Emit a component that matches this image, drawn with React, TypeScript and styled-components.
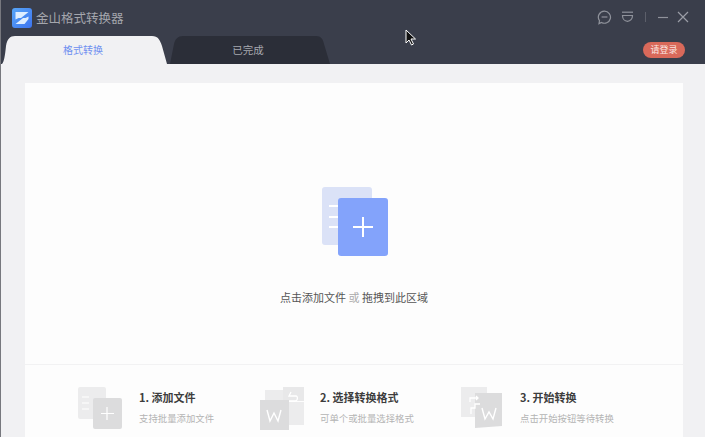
import styled, { createGlobalStyle } from "styled-components"

const font = `"Noto Sans CJK SC", "Noto Sans", sans-serif`

const GlobalStyle = createGlobalStyle`
    html, body {
        margin: 0;
        padding: 0;
        background: #f1f1f3;
    }
    * {
        box-sizing: border-box;
    }
`

const steps = [
    { title: "1. 添加文件", hint: "支持批量添加文件", icon: <AddGlyph />, width: 181, inset: 0 },
    { title: "2. 选择转换格式", hint: "可单个或批量选择格式", icon: <FormatGlyph />, width: 200, inset: 1 },
    { title: "3. 开始转换", hint: "点击开始按钮等待转换", icon: <StartGlyph />, width: 0, inset: 2 },
]

function Logo() {
    return (
        <svg width="20" height="20" viewBox="0 0 20 20">
            <defs>
                <linearGradient id="logoFill" x1="0" y1="0" x2="1" y2="1">
                    <stop offset="0" stopColor="#58a6f7" />
                    <stop offset="1" stopColor="#3d74f0" />
                </linearGradient>
            </defs>
            <rect width="20" height="20" rx="3" fill="url(#logoFill)" />
            <path d="M3.500 4h13L9 10h4.500l3-1.500V11l-4 5H3.500L11 10H6.500l-3 1.500z" fill="#dfeeff" />
        </svg>
    )
}

function ChatIcon() {
    return (
        <svg width="15" height="15" viewBox="0 0 15 15" fill="none" stroke="#8f929b" strokeWidth="1.2">
            <path d="M7.500 1.200a6 6 0 1 1-3 11.200L2 13.600l.5-2.900A6 6 0 0 1 7.500 1.200z" />
            <path d="M4.600 7h5.800" />
        </svg>
    )
}

function SkinIcon() {
    return (
        <svg width="13" height="12" viewBox="0 0 13 12" fill="none" stroke="#8f929b" strokeWidth="1.2">
            <path d="M1 1.200h11" />
            <path d="M1.500 4.500h10c0 3.500-2.200 5.800-5 5.800s-5-2.300-5-5.800z" />
        </svg>
    )
}

function MinIcon() {
    return (
        <svg width="10" height="10" viewBox="0 0 10 10" stroke="#8f929b" strokeWidth="1.2">
            <path d="M0 5.500h10" />
        </svg>
    )
}

function CloseIcon() {
    return (
        <svg width="12" height="12" viewBox="0 0 12 12" stroke="#9a9da6" strokeWidth="1.2">
            <path d="M1 1l10 10M11 1L1 11" />
        </svg>
    )
}

function DropGlyph() {
    return (
        <svg width="67" height="70" viewBox="0 0 67 70">
            <rect x="1" y="0" width="50" height="58" rx="3" fill="#dbe2f7" />
            <path d="M8 19h10M8 30h10M8 40h10" stroke="#fff" strokeWidth="2" />
            <rect x="17" y="11" width="50" height="58" rx="3" fill="#83a3fb" />
            <path d="M42 30v20M32 40h20" stroke="#fff" strokeWidth="2" />
        </svg>
    )
}

function AddGlyph() {
    return (
        <svg width="44" height="42" viewBox="0 0 44 42">
            <rect x="0" y="0" width="28" height="32" rx="2" fill="#ececed" />
            <path d="M4 10h7M4 16h7M4 22h7" stroke="#fff" strokeWidth="1.2" />
            <rect x="15" y="11" width="29" height="31" rx="2" fill="#dcdcdd" />
            <path d="M29 20v13M23 26.500h13" stroke="#fff" strokeWidth="1.2" />
        </svg>
    )
}

function FormatGlyph() {
    return (
        <svg width="44" height="43" viewBox="0 0 44 43">
            <rect x="5" y="3" width="18" height="12" fill="#ececed" />
            <rect x="23" y="0" width="21" height="14" fill="#e8e8e9" />
            <rect x="29" y="15" width="15" height="23" fill="#ececed" />
            <path d="M31 5l-2 4h7c2 0 2 5-1 5h-6" fill="none" stroke="#fff" strokeWidth="1.3" />
            <rect x="0" y="13" width="29" height="30" fill="#dcdcdd" />
            <path d="M7 23l3 11 4-8 4 8 3-11" fill="none" stroke="#fff" strokeWidth="1.4" />
        </svg>
    )
}

function StartGlyph() {
    return (
        <svg width="41" height="41" viewBox="0 0 41 41">
            <rect x="0" y="0" width="26" height="30" fill="#ececed" />
            <path d="M14 6h27v33l-27 2z" fill="#dcdcdd" />
            <path d="M9 15v-4h8M15 9l2 2-2 2M19 17h-5v4h-4v6" fill="none" stroke="#fff" strokeWidth="1.3" />
            <path d="M21 21l3 11 4-7 4 7 3-11" fill="none" stroke="#fff" strokeWidth="1.4" />
        </svg>
    )
}

export default function App() {
    return (
        <>
            <GlobalStyle />
            <Window>
                <Header>
                    <TitleRow>
                        <Logo />
                        <AppName>金山格式转换器</AppName>
                        <WindowControls>
                            <ChatIcon />
                            <SkinIcon />
                            <Separator />
                            <MinIcon />
                            <CloseIcon />
                        </WindowControls>
                    </TitleRow>
                    <TabRow>
                        <ActiveTab>格式转换</ActiveTab>
                        <IdleTab>已完成</IdleTab>
                        <LoginButton>请登录</LoginButton>
                    </TabRow>
                </Header>
                <Body>
                    <Card>
                        <DropArea>
                            <DropGlyph />
                            <DropText>
                                点击添加文件 <Muted>或</Muted> 拖拽到此区域
                            </DropText>
                        </DropArea>
                        <StepRow>
                            {steps.map(step => (
                                <Step key={step.title} $width={step.width}>
                                    <StepIcon $inset={step.inset}>{step.icon}</StepIcon>
                                    <div>
                                        <StepTitle>{step.title}</StepTitle>
                                        <StepHint>{step.hint}</StepHint>
                                    </div>
                                </Step>
                            ))}
                        </StepRow>
                    </Card>
                </Body>
                <Cursor width="12" height="17" viewBox="0 0 12 17">
                    <path d="M1 1v13l3-3 2.500 5 2-1-2.500-5h4.500z" fill="#111" stroke="#fff" strokeWidth="1" />
                </Cursor>
            </Window>
        </>
    )
}

const Window = styled.div`
    position: relative;
    width: 705px;
    height: 437px;
    overflow: hidden;
    display: flex;
    flex-direction: column;
    border-left: 1px solid #77787e;
    font-family: ${font};
    background: #f1f1f3;
`

const Header = styled.header`
    height: 64px;
    flex: none;
    background: #3a3e4b;
    display: flex;
    flex-direction: column;
`

const TitleRow = styled.div`
    height: 36px;
    flex: none;
    padding: 0 16px 0 11px;
    display: flex;
    align-items: center;
`

const AppName = styled.span`
    margin-left: 4px;
    color: #a4a6ad;
    font-size: 12.500px;
    line-height: 16px;
`

const WindowControls = styled.div`
    margin: -2px 0 0 auto;
    display: flex;
    align-items: center;
    gap: 9px;
`

const Separator = styled.i`
    width: 1px;
    height: 10px;
    margin: 0 3px 0 2px;
    background: #5c5f6a;
`

const TabRow = styled.div`
    flex: 1;
    padding: 0 20px 0 1px;
    display: flex;
    align-items: flex-end;
`

const ActiveTab = styled.div`
    width: 165px;
    height: 28px;
    padding: 0 3px 2px 0;
    display: flex;
    align-items: center;
    justify-content: center;
    background: #f1f1f3;
    color: #6f8ff0;
    font-size: 10px;
    clip-path: path("M0 28 C2 26 3 20 4 10 C5 3 8 0 13 0 H150 C156 0 158 4 160 10 L165 28 Z");
`

const IdleTab = styled.div`
    width: 160px;
    height: 28px;
    margin-left: 3px;
    padding: 0 4px 2px 0;
    display: flex;
    align-items: center;
    justify-content: center;
    background: #2b2e38;
    color: #a6a8ae;
    font-size: 10.500px;
    clip-path: path("M0 28 L4 8 C5 3 8 0 13 0 H146 C151 0 153 3 154 8 L160 28 Z");
`

const LoginButton = styled.div`
    margin: 0 0 6px auto;
    width: 42px;
    height: 16px;
    border-radius: 8px;
    background: #d9695a;
    color: #fbe6e2;
    font-size: 9px;
    line-height: 16px;
    text-align: center;
`

const Body = styled.main`
    flex: 1;
    min-height: 0;
    padding: 19px 22px 0 24px;
    display: flex;
`

const Card = styled.section`
    flex: 1;
    background: #fdfdfd;
    display: flex;
    flex-direction: column;
`

const DropArea = styled.div`
    height: 282px;
    flex: none;
    padding-top: 104px;
    display: flex;
    flex-direction: column;
    align-items: center;
    border-bottom: 1px solid #f2f2f3;
`

const DropText = styled.p`
    margin: 33px 0 0;
    color: #555;
    font-size: 11px;
    line-height: 14px;
`

const Muted = styled.span`
    color: #aaa;
`

const StepRow = styled.div`
    flex: 1;
    padding: 22px 0 0 53px;
    display: flex;
    align-items: flex-start;
`

const Step = styled.div<{ $width: number }>`
    ${props => props.$width ? `width: ${props.$width}px;` : ""}
    display: flex;
    align-items: flex-start;
`

const StepIcon = styled.div<{ $inset: number }>`
    width: 61px;
    padding-left: ${props => props.$inset}px;
    flex: none;
`

const StepTitle = styled.div`
    margin-top: 2px;
    color: #3d3d3d;
    font-size: 11px;
    font-weight: 700;
    line-height: 16px;
`

const StepHint = styled.div`
    margin-top: 7px;
    color: #b4b4b4;
    font-size: 9.400px;
    line-height: 13px;
`

const Cursor = styled.svg`
    position: absolute;
    left: 404px;
    top: 29px;
`
